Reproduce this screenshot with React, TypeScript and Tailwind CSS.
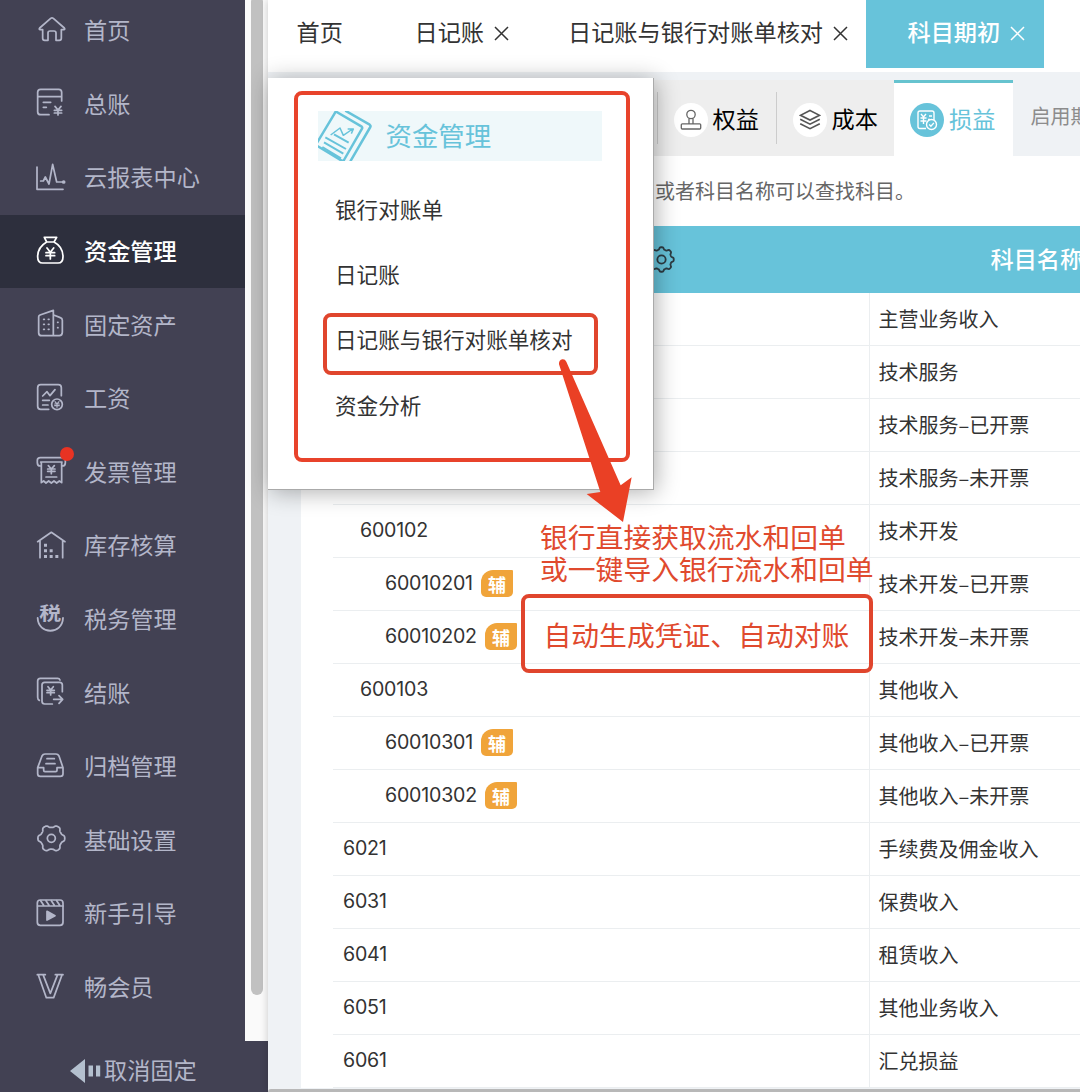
import type { ReactNode } from "react";

const sans = "font-['Noto_Sans_CJK_SC',sans-serif]";

/** Closed outline of a gear with softly squared teeth. */
function gearPath(cx: number, cy: number, r: number, depth: number, teeth: number) {
  const pts: string[] = [];
  for (let i = 0; i < 144; i++) {
    const a = (i / 144) * Math.PI * 2;
    const k = r + depth * Math.tanh(1.8 * Math.cos(teeth * a));
    pts.push(`${(cx + k * Math.cos(a)).toFixed(1)} ${(cy + k * Math.sin(a)).toFixed(1)}`);
  }
  return `M${pts.join("L")}Z`;
}

function NavIcon({ y, children }: { y: number; children: ReactNode }) {
  return (
    <svg
      className="size-9 shrink-0"
      viewBox={`99 ${y - 54} 108 108`}
      fill="none"
      stroke="currentColor"
      strokeWidth="5.2"
      strokeLinecap="round"
      strokeLinejoin="round"
    >
      {children}
    </svg>
  );
}

type NavEntry = { label: string; icon: ReactNode; active?: boolean; dot?: boolean };

const nav: NavEntry[] = [
  {
    label: "首页",
    icon: (
      <NavIcon y={92}>
        <path d="M128 88H120q-4-1-1-5L152 54q4-3 8 0L193 83q3 4-1 5H184V114q0 6-6 6H168V98q0-6-6-6H150q-6 0-6 6V120H134q-6 0-6-6Z" />
      </NavIcon>
    ),
  },
  {
    label: "总账",
    icon: (
      <NavIcon y={313}>
        <path d="M147 345H122q-9 0-9-9V278q0-9 9-9h54q9 0 9 9v26M114 291h71M130 308h22M130 323h9M165 320l9 11 9-11M174 331v15M163 332h22M163 340h22" />
      </NavIcon>
    ),
  },
  {
    label: "云报表中心",
    icon: (
      <NavIcon y={533}>
        <path d="M111 500V567H189M122 542h8l6-12 11 21 11-59 12 53h16" />
        <circle cx="191" cy="545" r="3" fill="currentColor" />
      </NavIcon>
    ),
  },
  {
    label: "资金管理",
    active: true,
    icon: (
      <NavIcon y={754}>
        <path d="M133 710h37l-8 14h-22zM140 724C121 735 113 750 113 768q0 19 15 19h46q15 0 15-19C189 750 181 734 162 724M141 742l10 13 10-13M151 755v20M138 756h26M138 765h26" />
      </NavIcon>
    ),
  },
  {
    label: "固定资产",
    icon: (
      <NavIcon y={105}>
        <path d="M116 80q0-3 4-5L160 61V137H125q-9 0-9-9ZM161 75l20 8q6 2 6 8v36q0 10-9 10H160" />
        <path d="M131 88h2M145 88h2M131 103h2M145 103h2M131 118h2M145 118h2M173 97h1M173 113h1" />
      </NavIcon>
    ),
  },
  {
    label: "工资",
    icon: (
      <NavIcon y={326}>
        <path d="M146 357H122q-9 0-9-9V292q0-9 9-9h53q9 0 9 9v24M128 317l13-13 9 12 15-18M128 330h20M128 344h16" />
        <circle cx="171" cy="342" r="16" />
        <path strokeWidth="3.5" d="M165 334l6 7 6-7M171 341v10M164 341h14M164 346h14" />
      </NavIcon>
    ),
  },
  {
    label: "发票管理",
    dot: true,
    icon: (
      <NavIcon y={547}>
        <path d="M124 529h-3q-9 0-9-10v-7q0-8 9-8h66q9 0 9 8v7q0 10-9 10h-2M122 517h64M124 517V579l7-5 7 6 8-6 8 6 8-6 8 6 8-6 7 5V517M145 528l9 10 9-10M154 538v14M143 538h22M143 545h22M138 562h32" />
      </NavIcon>
    ),
  },
  {
    label: "库存核算",
    icon: (
      <NavIcon y={767}>
        <path d="M113 754L154 726L195 754M120 752v50M188 752v50" />
        <path
          stroke="none"
          fill="currentColor"
          d="M132 760h9v9h-9zM132 777h9v9h-9zM132 794h9v9h-9zM149 777h9v9h-9zM149 794h9v9h-9zM166 794h9v9h-9z"
        />
      </NavIcon>
    ),
  },
  {
    label: "税务管理",
    icon: (
      <NavIcon y={118}>
        <path strokeWidth="5.5" d="M113 112C115 163 187 163 189 112" />
        <text fontSize="66" fontWeight="700" fill="currentColor" stroke="none" transform="translate(118 119) scale(1 .82)">
          税
        </text>
      </NavIcon>
    ),
  },
  {
    label: "结账",
    icon: (
      <NavIcon y={339}>
        <path d="M118 361q-5-2-5-9V303q0-8 8-8h52q5 0 7 5M157 372H134q-8 0-8-8V315q0-8 8-8h45q8 0 8 8v20M144 320l8 10 8-10M152 330v15M141 331h22M141 338h22M161 358h26M177 347l11 11-11 12" />
      </NavIcon>
    ),
  },
  {
    label: "归档管理",
    icon: (
      <NavIcon y={560}>
        <path d="M113 562L126 527q3-6 9-6h33q6 0 9 6L189 562V580q0 8-8 8H121q-8 0-8-8ZM113 562H131v8q0 4 4 4h32q4 0 4-4v-8h18M141 535h22M138 550h27" />
      </NavIcon>
    ),
  },
  {
    label: "基础设置",
    icon: (
      <NavIcon y={781}>
        <path d={gearPath(154, 776, 36.5, 4, 6)} />
        <circle cx="154" cy="776" r="12" />
      </NavIcon>
    ),
  },
  {
    label: "新手引导",
    icon: (
      <NavIcon y={131}>
        <rect x="112" y="89" width="77" height="76" rx="9" />
        <path d="M113 107h76M122 91l9 14M138 91l9 14M154 91l9 14M170 91l9 14" />
        <path d="M141 123L165 136L141 149Z" fill="currentColor" />
      </NavIcon>
    ),
  },
  {
    label: "畅会员",
    icon: (
      <NavIcon y={352}>
        <path d="M112 312h24M166 312h23M115 313L139 381h22L186 313M130 314L151 368L172 314" />
      </NavIcon>
    ),
  },
];

const rows: { code?: string; level: 1 | 2 | 3; name: string; aux?: boolean }[] = [
  { level: 1, name: "主营业务收入" },
  { level: 2, name: "技术服务" },
  { level: 3, name: "技术服务–已开票" },
  { level: 3, name: "技术服务–未开票" },
  { code: "600102", level: 2, name: "技术开发" },
  { code: "60010201", level: 3, name: "技术开发–已开票", aux: true },
  { code: "60010202", level: 3, name: "技术开发–未开票", aux: true },
  { code: "600103", level: 2, name: "其他收入" },
  { code: "60010301", level: 3, name: "其他收入–已开票", aux: true },
  { code: "60010302", level: 3, name: "其他收入–未开票", aux: true },
  { code: "6021", level: 1, name: "手续费及佣金收入" },
  { code: "6031", level: 1, name: "保费收入" },
  { code: "6041", level: 1, name: "租赁收入" },
  { code: "6051", level: 1, name: "其他业务收入" },
  { code: "6061", level: 1, name: "汇兑损益" },
];

const indent = { 1: "pl-[10px]", 2: "pl-[27px]", 3: "pl-[52px]" };

function Close() {
  return (
    <svg className="-mt-[1px] size-[15px] shrink-0" viewBox="0 0 15 15" fill="none" stroke="currentColor" strokeWidth="1.5">
      <path d="M1 1L14 14M14 1L1 14" />
    </svg>
  );
}

function Sidebar() {
  return (
    <aside className="flex w-[268px] shrink-0 flex-col bg-[#424153] text-[#b3b6c9]">
      <div className="flex h-[1041px] overflow-hidden">
        <nav className="-mt-[6px] w-[245px]">
          {nav.map((n) => (
            <div
              key={n.label}
              className={`flex h-[73.6px] items-center gap-[15px] pl-[33px] ${n.active ? "bg-[#2d2f3d] font-medium text-white" : ""}`}
            >
              <span className="relative">
                {n.icon}
                {n.dot && <i className="absolute -top-[7px] left-[27px] size-[14px] rounded-full bg-[#e83323]" />}
              </span>
              <span className="pb-[2px] text-[23.2px] leading-none">{n.label}</span>
            </div>
          ))}
        </nav>
        <div className="h-full w-[23px] bg-[#fafafa] pl-[6px]">
          <div className="-mt-1 h-[999px] w-3 rounded-full bg-[#c1c1c1]" />
        </div>
      </div>
      <div className="flex h-[51px] items-center pt-[9px] pl-[70px]">
        <svg className="h-6 w-[34px]" viewBox="0 0 34 24" fill="#b4c0cf">
          <path d="M0 12L15 0V24ZM18.500 6.500h4.500v11h-4.500zM26 6.500h4.200v11H26z" />
        </svg>
        <span className="pb-[2px] text-[23.200px] leading-none">取消固定</span>
      </div>
    </aside>
  );
}

function Tab({ className, label, closable = true }: { className: string; label: string; closable?: boolean }) {
  return (
    <div className={`flex h-[68px] shrink-0 items-center gap-[9.5px] ${className}`}>
      <span className="pb-[5px]">{label}</span>
      {closable && <Close />}
    </div>
  );
}

function TopTabs() {
  return (
    <div className="flex h-[72px] items-start bg-white text-[23.2px] leading-none text-[#333]">
      <Tab className="w-[146.5px] pl-[28.5px]" label="首页" closable={false} />
      <Tab className="w-[153.5px]" label="日记账" />
      <Tab className="w-[298px]" label="日记账与银行对账单核对" />
      <Tab className="w-[177.5px] bg-[#67c3da] pl-[41.5px] font-medium text-white" label="科目期初" />
    </div>
  );
}

function CategoryBar() {
  return (
    <div className="flex h-[76px] text-[23.2px] leading-none text-black">
      <div className="flex h-[76px] w-[592.5px] shrink-0 items-center justify-end bg-[#eeeeee]">
        <div className="flex h-[52px] w-[118.5px] items-center gap-[5px] border-l border-[#ccc] pt-[3px] pl-[15.5px]">
          <span className="flex size-[34px] items-center justify-center rounded-full bg-white">
            <svg className="size-[22px]" viewBox="0 0 22 22" fill="none" stroke="#666" strokeWidth="1.3">
              <circle cx="11" cy="5.500" r="4.200" />
              <path d="M9 9.500V15M13 9.500V15" />
              <rect x="1.300" y="14.800" width="19.400" height="5.200" rx="1" />
            </svg>
          </span>
          <span className="pb-[2px]">权益</span>
        </div>
        <div className="flex h-[52px] w-[118px] items-center gap-[5px] border-l border-[#ccc] pt-[3px] pl-[16px]">
          <span className="flex size-[34px] items-center justify-center rounded-full bg-white">
            <svg className="size-[22px]" viewBox="0 0 22 22" fill="none" stroke="#555" strokeWidth="1.6">
              <path d="M11 1.500L20.500 6.300L11 11L1.500 6.300ZM1.200 10.300L11 15.200L20.800 10.300M1.200 14.700L11 19.600L20.800 14.700" />
            </svg>
          </span>
          <span className="pb-[2px]">成本</span>
        </div>
      </div>
      <div className="flex w-[119px] shrink-0 items-center gap-[5px] border-t-[3px] border-[#66c3cf] bg-white pl-[16.5px] text-[#67c3da]">
        <span className="flex size-[34px] items-center justify-center rounded-full bg-[#67c3da]">
          <svg className="size-[22px]" viewBox="0 0 22 22" fill="none" stroke="white" strokeWidth="1.4">
            <path d="M10 19.500H4q-2 0-2-2V4q0-2 2-2h12q2 0 2 2v7M5 5l2.500 3L10 5M7.500 8v7M4.500 9h6M4.500 12h6M13 7h3M12 10.500h2" />
            <circle cx="15.500" cy="15.500" r="5" />
            <path d="M13.200 15.500l1.700 1.700 3-3.300" />
          </svg>
        </span>
        <span className="pb-[2px]">损益</span>
      </div>
      <div className="min-w-0 flex-1 overflow-hidden pt-[26px] pl-[18px] text-[20px] whitespace-nowrap text-[#8c8c8c]">启用期初</div>
    </div>
  );
}

function SubjectTable() {
  return (
    <div className="ml-[32px]">
      <div className="flex h-[67px] items-center bg-[#67c3da] text-[23.2px] leading-none text-white">
        <div className="flex w-[536px] shrink-0 justify-end pr-[194px]">
          <svg className="-mt-[1px] size-[27px]" viewBox="0 0 81 81" fill="none" stroke="#2d3b42" strokeWidth="5.5">
            <path d={gearPath(40.5, 40.5, 33.5, 3.5, 8)} />
            <circle cx="40.500" cy="40.500" r="12.500" />
          </svg>
        </div>
        <div className="pb-[2px] pl-[121.5px] font-medium whitespace-nowrap">科目名称</div>
      </div>
      {rows.map((r) => (
        <div key={r.name} className="flex h-[53px] border-b border-[#ebeef0] leading-none text-[#333]">
          <div className={`flex w-[537px] shrink-0 items-center gap-[8px] border-r border-[#ebeef0] ${indent[r.level]}`}>
            <span className="-mt-px font-['Inter',sans-serif] text-[19.600px] tracking-[-0.200px]">{r.code}</span>
            {r.aux && (
              <span className="-mt-[2px] flex h-[27px] w-8 items-center justify-center rounded-[5px] rounded-tl-[12px] rounded-tr-[1px] bg-[#f0a43a] pt-[2px] text-[18px] font-bold text-white">
                辅
              </span>
            )}
          </div>
          <div className="flex items-center pl-[8.500px] text-[20px] whitespace-nowrap">{r.name}</div>
        </div>
      ))}
    </div>
  );
}

const menuItem = "flex h-[65.3px] items-end pb-[6.5px] pl-[37.5px]";

function FundsMenu() {
  return (
    <div className="absolute top-[78px] left-[268px] h-[411.5px] w-[385.500px] border-r border-b border-[#aaa] bg-white pt-[13px] pl-[25.500px] shadow-[2px_2px_22px_rgba(0,0,0,0.32)]">
      <div className="h-[371px] w-[336.500px] rounded-[8px] border-[4.500px] border-[#e8432b] pt-[15.500px] text-[21.600px] leading-none text-[#333]">
        <div className="ml-[20px] flex h-[50px] w-[284px] items-center gap-[13px] bg-[#eff8fa] text-[26.400px] text-[#67c3da]">
          <svg className="h-[50px] w-[55px]" viewBox="174 333 165 150" fill="none" stroke="currentColor" strokeWidth="7.5" strokeLinejoin="round">
            <path d="M230 336L304 379Q308 382 306 386L252 480Q249 484 245 482L172 438Q167 434 170 430L224 340Q226 334 230 336ZM256 332L329 374Q333 377 331 381L271 484" />
            <path strokeWidth="4.500" d="M212 405L240 384L250 406L278 387M263 387H280L274 401" />
            <path strokeWidth="6" d="M222 403L266 428M196 412L258 447M192 427L250 461M187 441L243 475" />
          </svg>
          <span className="pb-[1px]">资金管理</span>
        </div>
        <div className={menuItem}>银行对账单</div>
        <div className={menuItem}>日记账</div>
        <div className={menuItem}>日记账与银行对账单核对</div>
        <div className={menuItem}>资金分析</div>
      </div>
    </div>
  );
}

function Annotations() {
  return (
    <>
      <div className="absolute top-[312.500px] left-[323px] h-[62.500px] w-[275px] rounded-[8px] border-[4.500px] border-[#e0452d]" />
      <svg className="absolute top-[350px] left-[540px] h-[180px] w-[100px]" viewBox="840 180 300 540" fill="#ea4025">
        <path d="M897 223Q896 210 907 208Q915 207 919 215L1082 586L1115 562L1089 696L980 612L1021 606Z" />
      </svg>
      <div className="absolute top-[519.500px] left-[540px] text-[27.800px] leading-[32px] whitespace-nowrap text-[#e04a2e]">
        <div>银行直接获取流水和回单</div>
        <div>或一键导入银行流水和回单</div>
      </div>
      <div className="absolute top-[594px] left-[521px] flex h-[79px] w-[352px] items-center rounded-[8px] border-[4.500px] border-[#e0452d] pt-[2px] pl-[18.500px] text-[27.800px] leading-none whitespace-nowrap text-[#e04a2e]">
        自动生成凭证、自动对账
      </div>
    </>
  );
}

export default function App() {
  return (
    <div className={`relative flex h-[1092px] w-[1080px] overflow-hidden bg-[#eff2f5] ${sans}`}>
      <Sidebar />
      <main className="h-full min-w-0 flex-1 overflow-hidden shadow-[0_0_8px_rgba(0,0,0,0.2)]">
        <TopTabs />
        <div className="ml-[33px] pt-2">
          <CategoryBar />
          <div className="bg-white">
            <div className="flex h-[70px] items-center pl-[354px] text-[20px] leading-none whitespace-nowrap text-[#666]">
              或者科目名称可以查找科目。
            </div>
            <SubjectTable />
          </div>
        </div>
      </main>
      <FundsMenu />
      <Annotations />
      <div className="absolute right-0 bottom-0 left-[268px] h-[3.500px] rounded-tl-md bg-[#b8b8b8]" />
    </div>
  );
}
